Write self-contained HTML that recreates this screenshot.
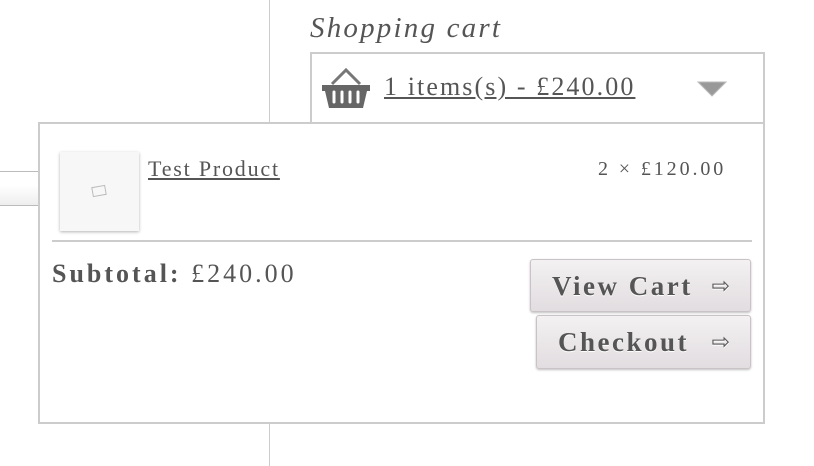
<!DOCTYPE html>
<html><head><style>
body{margin:0;width:814px;height:466px;background:#fff;position:relative;overflow:hidden;font-family:"Liberation Serif",serif;color:#555}
.a{position:absolute;white-space:nowrap}
.btn{position:absolute;border:1px solid #c9c2c6;border-radius:3px;background:linear-gradient(#f3f1f2,#e2dde0);box-shadow:0 1px 2px rgba(0,0,0,.25);font-weight:bold;font-size:27px;color:#555;text-shadow:0 1px 0 #fff;box-sizing:border-box;padding-left:21px;line-height:52px;letter-spacing:2.5px;white-space:nowrap}
.btn span{font-size:22px;font-weight:normal;position:absolute;right:20px;letter-spacing:0}
</style></head><body>
<div class="a" style="left:269px;top:0;width:1px;height:466px;background:#ccc"></div>
<div class="a" style="left:0;top:171px;width:38px;height:33px;border-top:1px solid #bbb;border-bottom:1px solid #bbb;background:linear-gradient(#fff 40%,#eee)"></div>
<div class="a" style="left:310px;top:12px;font-style:italic;font-size:29px;color:#555;letter-spacing:2.2px">Shopping cart</div>
<div class="a" style="left:310px;top:52px;width:451px;height:80px;border:2px solid #ccc;border-bottom:none;background:#fff"></div>
<svg class="a" style="left:320px;top:64px" width="52" height="46" viewBox="0 0 52 46">
<path d="M12 20 L26 6 L40 20" fill="none" stroke="#777" stroke-width="3"/>
<path d="M2 21 H50 V27 H47 L43 44 H9 L5 27 H2Z" fill="#666"/>
<path d="M14 28 V38 M22 28 V38 M30 28 V38 M38 28 V38" stroke="#fff" stroke-width="3" stroke-linecap="round"/>
</svg>
<div class="a" style="left:384px;top:72px;font-size:26px;text-decoration:underline;color:#555;letter-spacing:2.1px">1 items(s) - £240.00</div>
<svg class="a" style="left:697px;top:80px" width="30" height="20"><path d="M1 2 H29 L15 16Z" fill="#999" stroke="#bbb"/></svg>
<div class="a" style="left:38px;top:122px;width:723px;height:298px;border:2px solid #ccc;background:#fff"></div>
<div class="a" style="left:60px;top:152px;width:79px;height:79px;background:#f7f7f7;box-shadow:0 1px 3px rgba(0,0,0,.3)"></div>
<div class="a" style="left:92px;top:186px;width:12px;height:8px;border:1.5px solid #bbb;transform:rotate(-10deg)"></div>
<div class="a" style="left:148px;top:156px;font-size:22px;text-decoration:underline;color:#555;letter-spacing:1.8px">Test Product</div>
<div class="a" style="left:598px;top:158px;font-size:20px;color:#555;letter-spacing:2.9px">2 × £120.00</div>
<div class="a" style="left:52px;top:240px;width:700px;height:2px;background:#ccc"></div>
<div class="a" style="left:52px;top:259px;font-size:26px;color:#555;letter-spacing:3px"><b>Subtotal:</b> £240.00</div>
<div class="btn" style="left:530px;top:259px;width:221px;height:53px">View Cart<span>⇨</span></div>
<div class="btn" style="left:536px;top:315px;width:215px;height:54px">Checkout<span>⇨</span></div>
</body></html>
